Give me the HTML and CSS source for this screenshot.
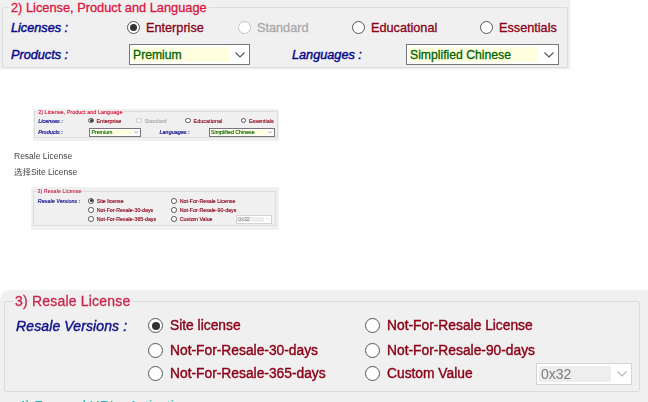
FILE: index.html
```html
<!DOCTYPE html>
<html lang="en">
<head>
<meta charset="utf-8">
<title>Resale License</title>
<link rel="stylesheet" href="styles.css">
</head>
<body>
<main class="page">
  <section class="shot shot-license">
    <fieldset class="group group-license">
      <legend>2) License, Product and Language</legend>
      <div class="row row-radios">
        <span class="field-label">Licenses :</span>
        <label class="opt"><span class="radio on"></span>Enterprise</label>
        <label class="opt off"><span class="radio"></span>Standard</label>
        <label class="opt"><span class="radio"></span>Educational</label>
        <label class="opt"><span class="radio"></span>Essentials</label>
      </div>
      <div class="row row-selects">
        <span class="field-label">Products :</span>
        <div class="combo combo-products"><span class="combo-text">Premium</span><svg class="chev" viewBox="0 0 10 6"><path d="M.5.5 5 5 9.500.5"/></svg></div>
        <span class="field-label">Languages :</span>
        <div class="combo combo-lang"><span class="combo-text">Simplified Chinese</span><svg class="chev" viewBox="0 0 10 6"><path d="M.5.5 5 5 9.500.5"/></svg></div>
      </div>
    </fieldset>
  </section>

  <section class="shot shot-license thumb thumb-license">
    <fieldset class="group group-license">
      <legend>2) License, Product and Language</legend>
      <div class="row row-radios">
        <span class="field-label">Licenses :</span>
        <label class="opt"><span class="radio on"></span>Enterprise</label>
        <label class="opt off"><span class="radio"></span>Standard</label>
        <label class="opt"><span class="radio"></span>Educational</label>
        <label class="opt"><span class="radio"></span>Essentials</label>
      </div>
      <div class="row row-selects">
        <span class="field-label">Products :</span>
        <div class="combo combo-products"><span class="combo-text">Premium</span><svg class="chev" viewBox="0 0 10 6"><path d="M.5.5 5 5 9.500.5"/></svg></div>
        <span class="field-label">Languages :</span>
        <div class="combo combo-lang"><span class="combo-text">Simplified Chinese</span><svg class="chev" viewBox="0 0 10 6"><path d="M.5.5 5 5 9.500.5"/></svg></div>
      </div>
    </fieldset>
  </section>

  <p class="note note-first">Resale License</p>
  <p class="note">选择Site License</p>

  <section class="shot shot-resale thumb thumb-resale">
    <fieldset class="group group-resale">
      <legend>3) Resale License</legend>
      <div class="resale-grid">
        <span class="field-label">Resale Versions :</span>
        <label class="opt"><span class="radio on"></span>Site license</label>
        <label class="opt"><span class="radio"></span>Not-For-Resale License</label>
        <span></span>
        <label class="opt"><span class="radio"></span>Not-For-Resale-30-days</label>
        <label class="opt"><span class="radio"></span>Not-For-Resale-90-days</label>
        <span></span>
        <label class="opt"><span class="radio"></span>Not-For-Resale-365-days</label>
        <div class="custom">
          <label class="opt"><span class="radio"></span>Custom Value</label>
          <div class="combo combo-hex"><span class="combo-text">0x32</span><svg class="chev" viewBox="0 0 10 6"><path d="M.5.5 5 5 9.500.5"/></svg></div>
        </div>
      </div>
    </fieldset>
    <p class="next-group">4) Forward URL - Activation</p>
  </section>

  <section class="shot shot-resale shot-resale-large">
    <fieldset class="group group-resale">
      <legend>3) Resale License</legend>
      <div class="resale-grid">
        <span class="field-label">Resale Versions :</span>
        <label class="opt"><span class="radio on"></span>Site license</label>
        <label class="opt"><span class="radio"></span>Not-For-Resale License</label>
        <span></span>
        <label class="opt"><span class="radio"></span>Not-For-Resale-30-days</label>
        <label class="opt"><span class="radio"></span>Not-For-Resale-90-days</label>
        <span></span>
        <label class="opt"><span class="radio"></span>Not-For-Resale-365-days</label>
        <div class="custom">
          <label class="opt"><span class="radio"></span>Custom Value</label>
          <div class="combo combo-hex"><span class="combo-text">0x32</span><svg class="chev" viewBox="0 0 10 6"><path d="M.5.5 5 5 9.500.5"/></svg></div>
        </div>
      </div>
    </fieldset>
    <p class="next-group">4) Forward URL - Activation</p>
  </section>
</main>
</body>
</html>
```
FILE: styles.css
```css
* { box-sizing: border-box; }
html, body { margin: 0; padding: 0; background: #fff; }
.page {
  width: 648px;
  height: 402px;
  overflow: hidden;
  font-family: "Liberation Sans", Arial, "Noto Sans CJK SC", sans-serif;
  font-size: 13px;
}

.shot { background: #f0f0f0; overflow: hidden; }
.shot-license {
  width: 570px;
  height: 69px;
  padding: 0 2px 1px 2px;
  border-bottom-right-radius: 3px;
  box-shadow: 0 0 1px #ccc;
}
.shot-resale {
  width: 648px;
  height: 112px;
  padding: 3px 8px 0 4px;
  border-radius: 10px 0 0 0;
}
.shot-resale-large { margin-top: 60px; filter: blur(.35px); }

.thumb { zoom: .432; filter: blur(.55px); }
.thumb-license { margin: 92px 0 0 76px; height: 74px; }
.thumb-resale { margin: 20px 0 0 81px; zoom: .383; }

.group {
  margin: 0;
  padding: 0;
  min-width: 0;
  border: 1px solid #dcdcdc;
  border-radius: 2px;
}
.group legend {
  margin-left: 6px;
  padding: 0 2px;
  color: #dc143c;
  font-size: 12.800px;
  font-weight: 400;
  letter-spacing: 0;
  -webkit-text-stroke: .3px currentColor;
  line-height: 15px;
}
.group-license { height: 68px; }
.group-resale { height: 99px; }
.group-resale legend { margin-left: 8px; font-size: 14px; color: #c9264c; line-height: 17px; letter-spacing: .2px; }

.row { display: grid; align-items: center; padding-left: 8px; }
.row-radios {
  grid-template-columns: 116px 111px 114px 128px auto;
  height: 25px;
}
.row-selects {
  grid-template-columns: 118px 163px 114px auto;
  height: 25px;
  margin-top: 2px;
}

.field-label {
  color: #0a0a8c;
  font-size: 12.700px;
  font-style: italic;
  -webkit-text-stroke: .45px currentColor;
  white-space: nowrap;
}
.opt {
  display: flex;
  align-items: center;
  gap: 5px;
  color: #8b0016;
  font-size: 12.700px;
  -webkit-text-stroke: .3px currentColor;
  white-space: nowrap;
}
.opt.off { color: #a9a9a9; }
.opt.off .radio { border-color: #c4c4c4; }

.radio {
  flex: none;
  display: flex;
  align-items: center;
  justify-content: center;
  width: 13px;
  height: 13px;
  margin-right: 1px;
  border: 1.4px solid #555;
  border-radius: 50%;
  background: #fff;
}
.radio.on::after {
  content: "";
  width: 7px;
  height: 7px;
  border-radius: 50%;
  background: #333;
}

.combo {
  display: flex;
  align-items: center;
  justify-content: space-between;
  height: 21px;
  padding: 2px 4px 2px 2px;
  border: 1px solid #767676;
  background: #fff;
}
.combo-text {
  flex: 1;
  align-self: stretch;
  display: flex;
  align-items: center;
  padding-left: 1px;
  background: #ffffe0;
  color: #006400;
  font-size: 12.200px;
  -webkit-text-stroke: .3px currentColor;
  white-space: nowrap;
}
.chev { flex: none; width: 10px; height: 6px; margin-left: 6px; }
.chev path { fill: none; stroke: #555; stroke-width: 1.1; }
.combo-products { width: 121px; }
.combo-lang { width: 153px; }

.resale-grid {
  display: grid;
  grid-template-columns: 132px 217px 1fr;
  grid-template-rows: 25px 24px 23px;
  align-items: center;
  padding: 3px 0 0 11px;
}
.resale-grid .opt { font-size: 13.800px; gap: 6px; -webkit-text-stroke: .4px currentColor; }
.resale-grid .radio { width: 15px; height: 15px; }
.resale-grid .radio.on::after { width: 8px; height: 8px; }
.resale-grid .field-label { font-size: 14px; letter-spacing: .12px; color: #14148c; }
.custom { display: flex; align-items: center; justify-content: space-between; padding-right: 7px; }
.combo-hex {
  width: 96px;
  height: 22px;
  border-color: #d4d4d4;
}
.combo-hex .combo-text {
  background: #eeeeee;
  color: #7c7c7c;
  -webkit-text-stroke: 0;
  font-size: 14px;
  padding-left: 2px;
}
.combo-hex .chev path { stroke: #b5b5b5; }

.note {
  margin: 0 0 0 14px;
  height: 16px;
  color: #444;
  font-size: 8.500px;
  line-height: 16px;
  filter: blur(.2px);
}
.note-first { margin-top: 7px; }

.next-group {
  margin: 6px 0 0 14px;
  color: #1fb3ae;
  font-size: 14px;
  line-height: 16px;
  white-space: nowrap;
}
```
